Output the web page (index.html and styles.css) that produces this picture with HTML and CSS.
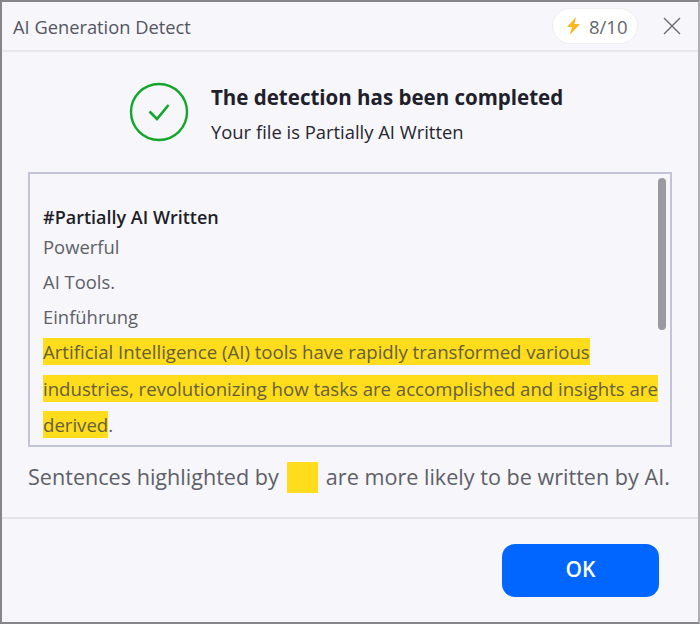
FILE: index.html
```html
<!DOCTYPE html>
<html lang="en">
<head>
<meta charset="utf-8">
<title>AI Generation Detect</title>
<link rel="stylesheet" href="styles.css">
</head>
<body>
<div class="dialog">
  <header class="titlebar">
    <span class="title">AI Generation Detect</span>
    <span class="quota">
      <svg class="bolt" width="15" height="18" viewBox="0 0 15 18"><path d="M10 0 1 10h5L3.800 18 14 7H8.400L10 0Z" fill="#f9b91c"/></svg>
      <span>8/10</span>
    </span>
    <svg class="close" width="18" height="18" viewBox="0 0 18 18"><path d="M1 1 17 17M17 1 1 17" stroke="#6b6b72" stroke-width="1.4" fill="none"/></svg>
  </header>
  <section class="status">
    <svg class="check" width="60" height="60" viewBox="0 0 60 60"><circle cx="30" cy="30" r="28" fill="none" stroke="#12a72a" stroke-width="2.4"/><path d="M20.500 29.500 28 37 39.500 23" fill="none" stroke="#12a72a" stroke-width="2.600"/></svg>
    <div class="status-text">
      <h1 class="status-title">The detection has been completed</h1>
      <p class="status-sub">Your file is Partially AI Written</p>
    </div>
  </section>
  <section class="result">
    <div class="scrollthumb"></div>
    <p class="heading">#Partially AI Written</p>
    <p class="line l1">Powerful</p>
    <p class="line l2">AI Tools.</p>
    <p class="line l3">Einführung</p>
    <p class="para"><mark>Artificial Intelligence (AI) tools have rapidly transformed various industries, revolutionizing how tasks are accomplished and insights are derived</mark>.</p>
  </section>
  <p class="legend">Sentences highlighted by <span class="swatch"></span> are more likely to be written by AI.</p>
  <footer class="footer">
    <button class="ok" type="button">OK</button>
  </footer>
</div>
</body>
</html>
```
FILE: styles.css
```css
* { box-sizing: border-box; }
html, body { margin: 0; padding: 0; }
body { width: 700px; height: 624px; background: #f6f6fb; font-family: "Open Sans", "Noto Sans", sans-serif; overflow: hidden; }
.dialog { width: 700px; height: 624px; border: 2px solid #85858a; border-right-color: #b0b0b4; display: flex; flex-direction: column; background: #f6f6fb; }
.titlebar { height: 50px; flex: none; display: flex; align-items: center; padding: 0 17px 0 11px; border-bottom: 2px solid #e8e8ec; }
.title { font-size: 18.300px; color: #55555f; flex: 1; }
.quota { display: flex; align-items: center; gap: 8px; height: 36px; width: 86px; padding-left: 13px; border-radius: 18px; background: #fff; border: 1px solid #eeeef2; font-size: 18.500px; color: #66666e; margin-right: 25px; }
.close { flex: none; }
.status { height: 120px; flex: none; display: flex; padding: 30px 0 0 127px; gap: 22px; }
.status-text { margin-top: 1px; }
.status-title { margin: 0; font-size: 20.500px; line-height: 28px; font-weight: 700; color: #20202a; }
.status-sub { margin: 9px 0 0; font-size: 18.400px; line-height: 24px; color: #26262f; }
.result { position: relative; margin: 0 26px; height: 275px; flex: none; border: 2px solid #c4c4d8; padding: 31px 10px 0 13px; overflow: hidden; }
.scrollthumb { position: absolute; right: 4px; top: 4px; width: 8px; height: 152px; border-radius: 4px; background: #9a9aa0; }
.heading { margin: 0; font-size: 18px; line-height: 24px; font-weight: 600; color: #1e1e28; }
.line { margin: 0; font-size: 18.400px; line-height: 34px; color: #5f5f68; }
.l1 { line-height: 36px; }
.l3 { line-height: 35px; }
.para { margin: 0; font-size: 18.600px; line-height: 36.500px; color: #5f5f68; }
mark { background: #ffdc1c; color: #66603a; padding: 1px 0; }
.legend { margin: 14px 0 0 26px; font-size: 21.600px; line-height: 32px; color: #5f5f68; white-space: nowrap; display: flex; align-items: center; gap: 8px; }
.swatch { width: 31px; height: 31px; background: #ffdc1c; flex: none; }
.footer { margin-top: 24px; border-top: 2px solid #e6e6ea; flex: 1; display: flex; justify-content: flex-end; align-items: flex-start; padding: 25px 39px 0 0; }
.ok { width: 157px; height: 53px; border: 0; border-radius: 13px; background: #0066ff; color: #fff; font: 600 21px/1 "Open Sans", sans-serif; padding: 0 0 2px; }
```
